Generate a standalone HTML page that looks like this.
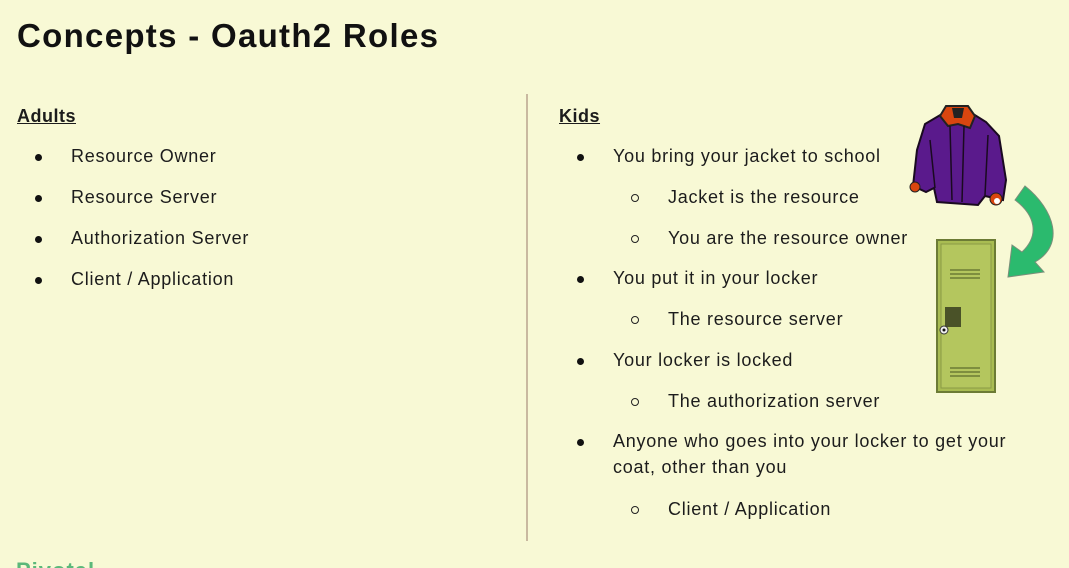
<!DOCTYPE html>
<html><head><style>
html,body{margin:0;width:1069px;height:568px;overflow:hidden}
body{background:#f8f9d5;font-family:"Liberation Sans",sans-serif;color:#1c1c1c;position:relative}
.t{position:absolute;white-space:nowrap}
h1{position:absolute;left:17px;top:17px;margin:0;font-size:33px;font-weight:bold;color:#111;letter-spacing:1.3px}
.h{font-weight:bold;text-decoration:underline;font-size:18px;letter-spacing:0.5px}
.s{font-size:18px;letter-spacing:0.75px}
.b{position:absolute;width:7px;height:7px;border-radius:50%;background:#111}
.c{position:absolute;width:6px;height:6px;border-radius:50%;border:1.3px solid #222}
</style></head><body>
<h1>Concepts - Oauth2 Roles</h1>
<div style="position:absolute;left:526px;top:94px;width:2px;height:447px;background:#c9b9a0"></div>
<div class="t h" style="left:17px;top:106px">Adults</div>
<div class="b" style="left:35px;top:154px"></div><div class="t s" style="left:71px;top:146px">Resource Owner</div>
<div class="b" style="left:35px;top:195px"></div><div class="t s" style="left:71px;top:187px">Resource Server</div>
<div class="b" style="left:35px;top:236px"></div><div class="t s" style="left:71px;top:228px">Authorization Server</div>
<div class="b" style="left:35px;top:277px"></div><div class="t s" style="left:71px;top:269px">Client / Application</div>

<div class="t h" style="left:559px;top:106px">Kids</div>
<div class="b" style="left:577px;top:154px"></div><div class="t s" style="left:613px;top:146px">You bring your jacket to school</div>
<div class="c" style="left:631px;top:194px"></div><div class="t s" style="left:668px;top:187px">Jacket is the resource</div>
<div class="c" style="left:631px;top:235px"></div><div class="t s" style="left:668px;top:228px">You are the resource owner</div>
<div class="b" style="left:577px;top:276px"></div><div class="t s" style="left:613px;top:268px">You put it in your locker</div>
<div class="c" style="left:631px;top:316px"></div><div class="t s" style="left:668px;top:309px">The resource server</div>
<div class="b" style="left:577px;top:358px"></div><div class="t s" style="left:613px;top:350px">Your locker is locked</div>
<div class="c" style="left:631px;top:398px"></div><div class="t s" style="left:668px;top:391px">The authorization server</div>
<div class="b" style="left:577px;top:439px"></div><div class="t s" style="left:613px;top:431px">Anyone who goes into your locker to get your</div>
<div class="t s" style="left:613px;top:457px">coat, other than you</div>
<div class="c" style="left:631px;top:506px"></div><div class="t s" style="left:668px;top:499px">Client / Application</div>
<div class="t" style="left:16px;top:558px;font-size:22px;font-weight:bold;color:#5cb87a;letter-spacing:1px">Pivotal</div>

<svg style="position:absolute;left:0;top:0" width="1069" height="568">
<path d="M942 114 L925 124 L917 150 L913 186 L926 192 L934 188 L937 202 L978 205 L985 196 L1003 200 L1006 180 L999 136 L986 122 L970 112 Z" fill="#5a1a8c" stroke="#1a0a20" stroke-width="2"/>
<path d="M946 106 L940 116 L948 126 L958 124 L970 128 L975 116 L968 106 Z" fill="#d9460f" stroke="#222" stroke-width="2"/>
<path d="M952 108 L964 108 L962 118 L954 118 Z" fill="#222"/>
<circle cx="915" cy="187" r="5" fill="#d9460f" stroke="#222"/>
<circle cx="996" cy="199" r="6" fill="#d9460f" stroke="#222"/>
<circle cx="997" cy="201" r="3" fill="#fff"/>
<path d="M950 126 L952 200 M964 126 L962 202 M930 140 L935 188 M988 135 L985 195" stroke="#1a0a20" stroke-width="1.5" fill="none"/>
<path d="M1015 200 L1025 186 C1055 210 1065 245 1035 262 L1044 272 L1008 277 L1012 245 L1022 252 C1040 235 1035 215 1015 200 Z" fill="#2bba6e" stroke="#7a8f7a" stroke-width="1"/>
<rect x="937" y="240" width="58" height="152" fill="#a9bc52" stroke="#6c7b35" stroke-width="2"/>
<rect x="941" y="244" width="50" height="144" fill="#b4c65e" stroke="#8a9a45" stroke-width="1"/>
<path d="M950 270 H980 M950 274 H980 M950 278 H980 M950 368 H980 M950 372 H980 M950 376 H980" stroke="#6c7b35" stroke-width="1.5"/>
<rect x="945" y="307" width="16" height="20" fill="#4a5228"/>
<circle cx="944" cy="330" r="4" fill="#eee" stroke="#333"/><circle cx="944" cy="330" r="1.5" fill="#111"/>
</svg>
</body></html>
